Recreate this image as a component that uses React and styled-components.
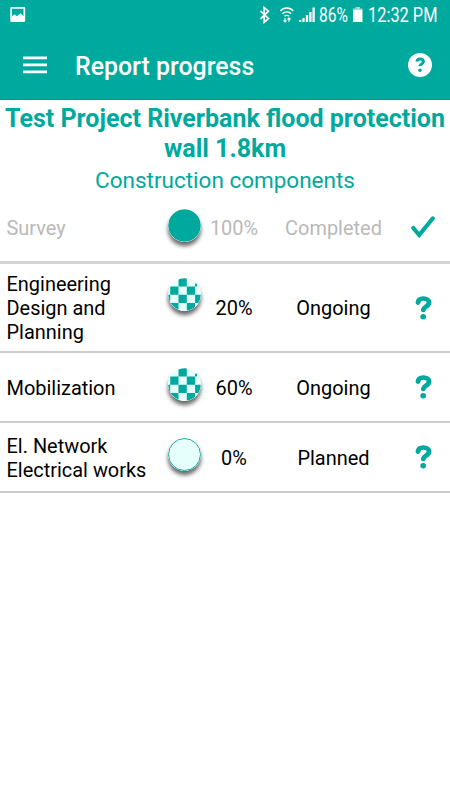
import React from "react";
import styled, { createGlobalStyle } from "styled-components";

const teal = "#00a99d";
const pale = "#e6fffc";

const GlobalStyle = createGlobalStyle`
  * {
    box-sizing: border-box;
  }

  body {
    margin: 0;
    background: #fff;
    font-family: Roboto, sans-serif;
  }
`;

const Screen = styled.div`
  width: 450px;
  height: 800px;
  overflow: hidden;
  background: #fff;
`;

const StatusBar = styled.div`
  display: flex;
  align-items: center;
  height: 30px;
  padding: 0 12px 0 10px;
  background: ${teal};
  color: #fff;
`;

const StatusIcons = styled.div`
  display: flex;
  align-items: center;
  margin-left: auto;
`;

const StatusText = styled.span`
  display: inline-block;
  width: ${({ $width }) => $width}px;
  padding-top: 2px;
  font-size: 19.5px;
  line-height: 30px;
  white-space: nowrap;

  span {
    display: inline-block;
    transform: scaleX(${({ $scale }) => $scale});
    transform-origin: left;
  }
`;

const Toolbar = styled.header`
  display: flex;
  align-items: center;
  height: 70px;
  padding: 0 18px 0 23px;
  border-bottom: 1px solid #089a90;
  background: ${teal};
  color: #fff;
`;

const MenuButton = styled.button`
  display: flex;
  padding: 0;
  border: none;
  background: none;
  color: inherit;
`;

const ToolbarTitle = styled.h1`
  flex: 1;
  margin: 4px 0 0 28px;
  font-size: 24.9px;
  font-weight: 500;
  line-height: 30px;
`;

const ProjectTitle = styled.h2`
  margin: 4px 0 0;
  color: ${teal};
  font-size: 25px;
  font-weight: 700;
  line-height: 29.5px;
  text-align: center;
`;

const Subtitle = styled.h3`
  margin: 2px 0 0;
  color: ${teal};
  font-size: 22.5px;
  font-weight: 400;
  line-height: 30px;
  text-align: center;
`;

const List = styled.ul`
  margin: -1px 0 0;
  padding: 0;
  list-style: none;
`;

const Row = styled.li`
  display: grid;
  grid-template-columns: 168px 34px 64px 135px 44px;
  align-items: center;
  height: ${({ $height }) => $height}px;
  border-bottom: ${({ $done }) => ($done ? "3px solid #d4d4d4" : "2px solid #cdcdcd")};
  color: ${({ $done }) => ($done ? "#b9b9b9" : "#000")};
  font-size: 19.95px;
  line-height: 23.7px;
`;

const Name = styled.div`
  padding: 3px 12px 0 6.5px;
  white-space: pre-line;
`;

const Marker = styled.div`
  height: 33px;
  margin-bottom: ${({ $lift }) => $lift}px;

  svg {
    display: block;
    border-radius: 50%;
    box-shadow: 0 4px 4px rgba(0, 0, 0, 0.6);
  }
`;

const Cell = styled.div`
  padding-top: 3px;
  text-align: center;
`;

const Action = styled.div`
  display: flex;
  justify-content: center;
  color: ${teal};
`;

const questionPath = "M2.8 6.6C3.1 4 5.1 2.5 7.9 2.5c3 0 5.300 1.500 5.300 4 0 2-1.200 3-2.800 4.100C8.600 11.800 8 12.400 7.800 14";

const Question = () => (
  <svg width="17" height="24" viewBox="0 0 16 24" fill="none" preserveAspectRatio="none">
    <path d={questionPath} stroke="currentColor" strokeWidth="4.600" strokeLinecap="round" />
    <circle cx="7.700" cy="20.700" r="2.700" fill="currentColor" />
  </svg>
);

const Check = () => (
  <svg width="26" height="24" viewBox="0 0 26 24" fill="none">
    <path d="M3.300 12L9.200 19L22.700 2.500" stroke="currentColor" strokeWidth="4.200" strokeLinecap="round" />
  </svg>
);

const Dot = ({ type }) => (
  <svg width="33" height="33" viewBox="0 0 33 33">
    {type === "full" && <circle cx="16.500" cy="16.500" r="16.300" fill={teal} />}
    {type === "empty" && (
      <circle cx="16.500" cy="16.500" r="16" fill={pale} stroke={teal} />
    )}
    {type === "partial" && (
      <>
        <circle cx="16.500" cy="16.500" r="16.300" fill={pale} />
        <clipPath id="dot">
          <circle cx="16.500" cy="16.500" r="16.300" />
        </clipPath>
        <path
          clipPath="url(#dot)"
          fill={teal}
          d="M10.500 0h8.300v8.500h-8.300zM27.100 5.500h2v3h-2zM2.200 8.500h8.300v8.300H2.200zM18.800 8.500h8.300v8.300h-8.300zM0 16.800h2.200v8.300H0zM10.500 16.800h8.300v8.300h-8.300zM27.100 16.800h8v8.300h-8zM2.200 25.100h8.300v8H2.200zM18.800 25.100h8.300v8h-8.300z"
        />
      </>
    )}
  </svg>
);

const components = [
  { name: "Survey", dot: "full", percent: "100%", status: "Completed", height: 70, lift: 5, done: true },
  { name: "Engineering\nDesign and\nPlanning", dot: "partial", percent: "20%", status: "Ongoing", height: 89, lift: 27 },
  { name: "Mobilization", dot: "partial", percent: "60%", status: "Ongoing", height: 70, lift: 6 },
  { name: "El. Network\nElectrical works", dot: "empty", percent: "0%", status: "Planned", height: 70, lift: 6 },
];

const App = () => {
  return (
    <Screen>
      <GlobalStyle />
      <StatusBar>
        <svg width="16" height="16" viewBox="0 0 16 16">
          <path
            fill="#fff"
            fillRule="evenodd"
            d="M1.500 0h12.500q1.200 0 1.200 1.200v12.600q0 1.200-1.200 1.200H1.500q-1.200 0-1.200-1.200V1.200Q.3 0 1.500 0zM2 1.700v7.500l2.500-2 2.500 2 3.500-3 3 3V1.700z"
          />
        </svg>
        <StatusIcons>
          <svg width="61" height="20" viewBox="0 0 61 20" fill="none" stroke="#fff">
            <path d="M2.500 6l8 7.500-4.300 3.800V2.500l4.300 3.700-8 7.600" strokeWidth="1.700" />
            <path d="M22.500 6c3-4 9.600-4 12.700 0M24.500 8.700c2-2.500 6.600-2.500 8.600 0M26.500 11.300c1-1.200 3.500-1.200 4.500 0" strokeWidth="1.400" />
            <path d="M27 13v4M25.500 15.500L27 17l1.500-1.500M31 17v-4M29.500 14.500L31 13l1.500 1.500" strokeWidth="1.100" />
            <path d="M42.200 17v-2M45.500 17v-4M49 17v-7M52.400 17V7M55.600 17V2.500" strokeWidth="2.300" />
          </svg>
          <StatusText $width={34} $scale={0.8}>
            <span>86%</span>
          </StatusText>
          <svg width="15" height="16" viewBox="0 0 15 16">
            <path fill="#fff" d="M0 3h9.500v12H0z" />
            <path fill="#9bdad5" d="M2.500 0h4.500v1.500h2.500V3H0V1.500h2.500z" />
          </svg>
          <StatusText $width={70} $scale={0.84}>
            <span>12:32 PM</span>
          </StatusText>
        </StatusIcons>
      </StatusBar>
      <Toolbar>
        <MenuButton aria-label="Menu">
          <svg width="24" height="18" viewBox="0 0 24 18">
            <path fill="#fff" d="M0 .5h24v2.700H0zM0 7.500h24v2.700H0zM0 14.500h24v2.700H0z" />
          </svg>
        </MenuButton>
        <ToolbarTitle>Report progress</ToolbarTitle>
        <svg width="24" height="24" viewBox="0 0 24 24" fill="none">
          <circle cx="12" cy="12" r="12" fill="#fff" />
          <g transform="translate(7.200 4.500) scale(.62)" color={teal}>
            <path d={questionPath} stroke="currentColor" strokeWidth="4.700" />
            <circle cx="7.700" cy="20.500" r="2.800" fill="currentColor" />
          </g>
        </svg>
      </Toolbar>
      <ProjectTitle>
        Test Project Riverbank flood protection wall 1.8km
      </ProjectTitle>
      <Subtitle>Construction components</Subtitle>
      <List>
        {components.map((item) => (
          <Row key={item.name} $height={item.height} $done={item.done}>
            <Name>{item.name}</Name>
            <Marker $lift={item.lift}>
              <Dot type={item.dot} />
            </Marker>
            <Cell>{item.percent}</Cell>
            <Cell>{item.status}</Cell>
            <Action>{item.done ? <Check /> : <Question />}</Action>
          </Row>
        ))}
      </List>
    </Screen>
  );
};

export default App;
